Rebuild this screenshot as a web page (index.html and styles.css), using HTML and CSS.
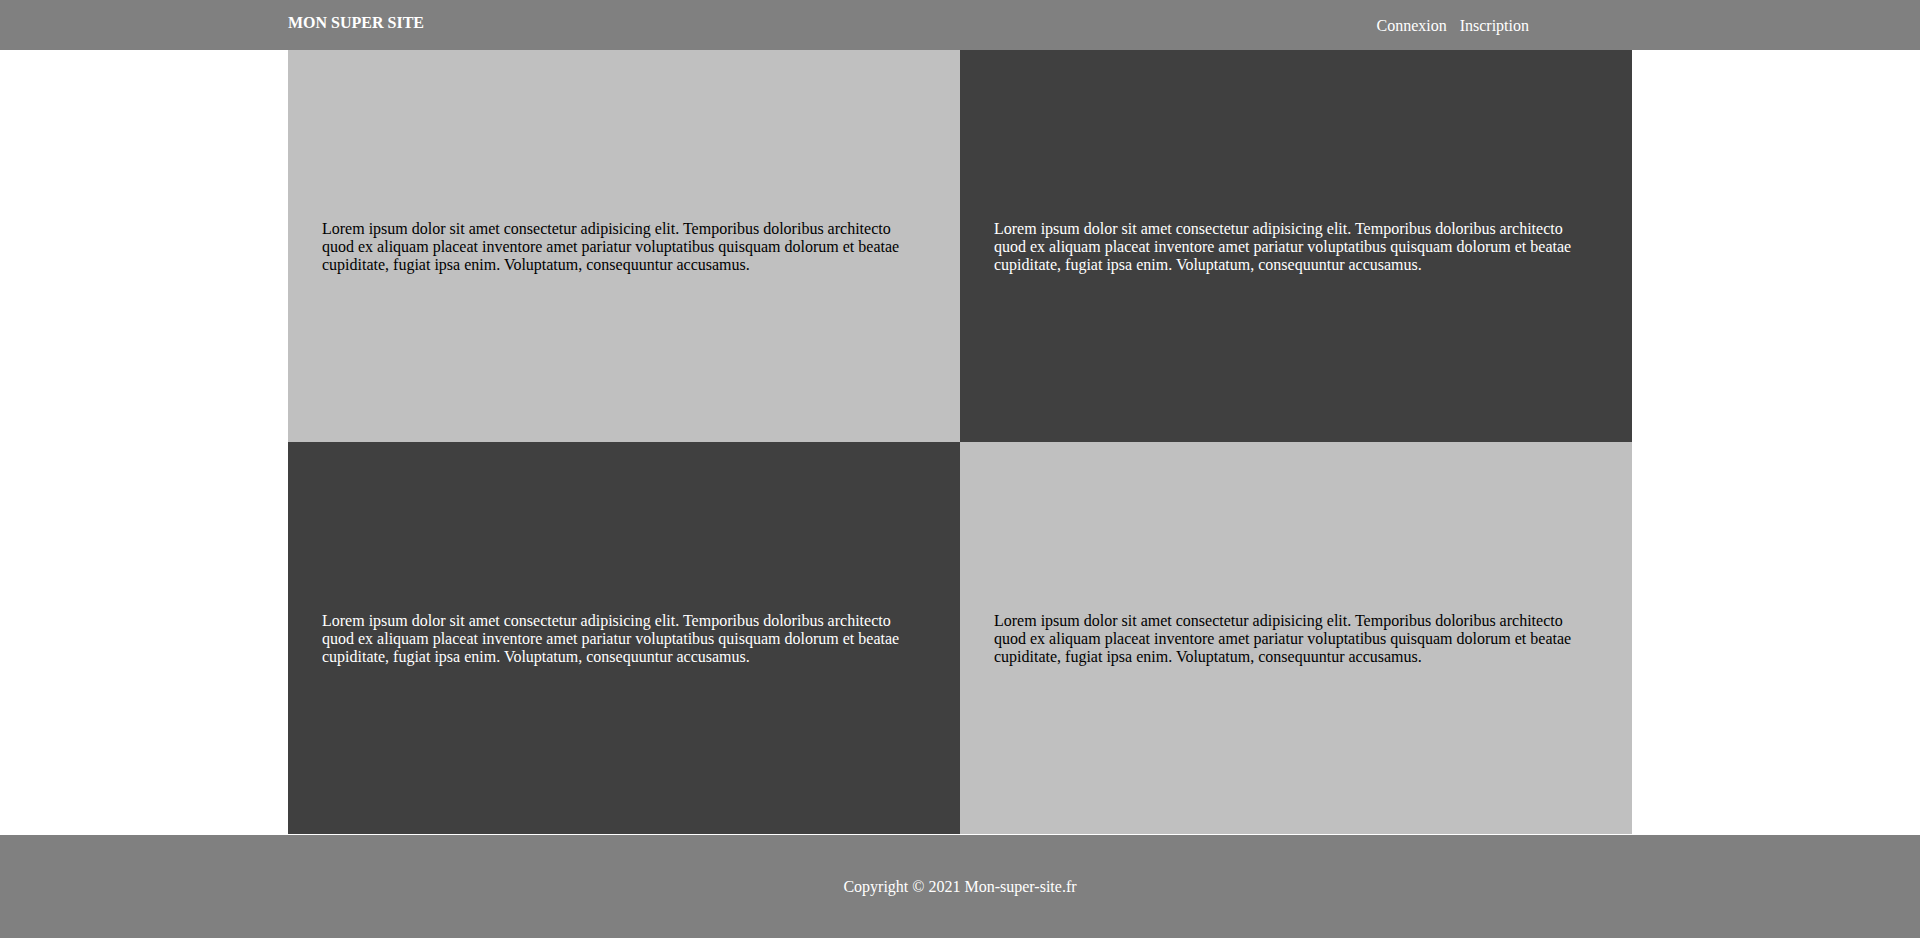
FILE: index.html
```html
<!DOCTYPE html>
<html lang="fr">
<head>
<meta charset="utf-8">
<title>Mon super site</title>
<link rel="stylesheet" href="styles.css">
</head>
<body>
<header class="site-header">
  <div class="header-inner">
    <div class="brand">MON SUPER SITE</div>
    <nav class="nav">
      <a class="nav-link" href="#">Connexion</a>
      <a class="nav-link" href="#">Inscription</a>
    </nav>
  </div>
</header>
<main class="grid">
  <section class="cell cell-light"><p class="cell-text">Lorem ipsum dolor sit amet consectetur adipisicing elit. Temporibus doloribus architecto quod ex aliquam placeat inventore amet pariatur voluptatibus quisquam dolorum et beatae cupiditate, fugiat ipsa enim. Voluptatum, consequuntur accusamus.</p></section>
  <section class="cell cell-dark"><p class="cell-text">Lorem ipsum dolor sit amet consectetur adipisicing elit. Temporibus doloribus architecto quod ex aliquam placeat inventore amet pariatur voluptatibus quisquam dolorum et beatae cupiditate, fugiat ipsa enim. Voluptatum, consequuntur accusamus.</p></section>
  <section class="cell cell-dark"><p class="cell-text">Lorem ipsum dolor sit amet consectetur adipisicing elit. Temporibus doloribus architecto quod ex aliquam placeat inventore amet pariatur voluptatibus quisquam dolorum et beatae cupiditate, fugiat ipsa enim. Voluptatum, consequuntur accusamus.</p></section>
  <section class="cell cell-light"><p class="cell-text">Lorem ipsum dolor sit amet consectetur adipisicing elit. Temporibus doloribus architecto quod ex aliquam placeat inventore amet pariatur voluptatibus quisquam dolorum et beatae cupiditate, fugiat ipsa enim. Voluptatum, consequuntur accusamus.</p></section>
</main>
<footer class="site-footer">
  <p class="copyright">Copyright © 2021 Mon-super-site.fr</p>
</footer>
</body>
</html>
```
FILE: styles.css
```css
html, body {
  margin: 0;
  padding: 0;
}

body {
  font-family: "Liberation Serif", "Times New Roman", serif;
  font-size: 16px;
  background: #ffffff;
  color: #000000;
  overflow: hidden;
}

.site-header {
  background: #808080;
  height: 50px;
}

.header-inner {
  width: 1344px;
  margin: 0 auto;
  display: flex;
  justify-content: space-between;
  align-items: flex-start;
}

.brand {
  color: #ffffff;
  font-weight: bold;
  padding-top: 14px;
}

.nav {
  display: flex;
  gap: 13px;
  padding-top: 17px;
  padding-right: 103px;
}

.nav-link {
  color: #ffffff;
  text-decoration: none;
}

.grid {
  width: 1344px;
  margin: 0 auto;
  display: grid;
  grid-template-columns: 1fr 1fr;
  grid-auto-rows: 392px;
  padding-bottom: 1px;
}

.cell {
  display: flex;
  align-items: center;
  padding: 2px 34px 0;
}

.cell-light {
  background: #c0c0c0;
  color: #000000;
}

.cell-dark {
  background: #404040;
  color: #ffffff;
}

.cell-text {
  margin: 0;
}

.site-footer {
  background: #808080;
  height: 103px;
  display: flex;
  align-items: center;
  justify-content: center;
}

.copyright {
  margin: 0;
  color: #ffffff;
}
```
